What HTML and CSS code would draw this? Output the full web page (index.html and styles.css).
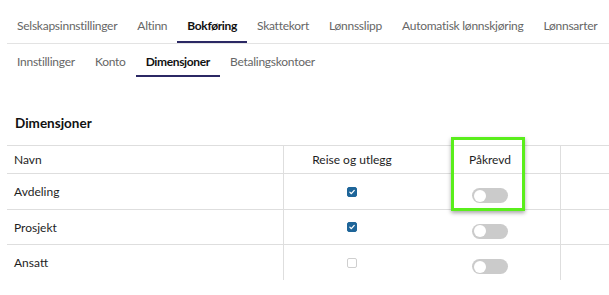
FILE: index.html
```html
<!DOCTYPE html>
<html lang="no">
<head>
<meta charset="utf-8">
<link rel="stylesheet" href="styles.css">
</head>
<body>
<nav class="tabbar tabbar-main">
  <a class="tab">Selskapsinnstillinger</a>
  <a class="tab">Altinn</a>
  <a class="tab active">Bokføring</a>
  <a class="tab">Skattekort</a>
  <a class="tab">Lønnsslipp</a>
  <a class="tab">Automatisk lønnskjøring</a>
  <a class="tab">Lønnsarter</a>
</nav>
<nav class="tabbar tabbar-sub">
  <a class="tab">Innstillinger</a>
  <a class="tab">Konto</a>
  <a class="tab active">Dimensjoner</a>
  <a class="tab">Betalingskontoer</a>
</nav>
<h2 class="heading">Dimensjoner</h2>
<div class="table-wrap">
  <div class="table">
    <div class="row head">
      <div class="cell name">Navn</div>
      <div class="cell mid">Reise og utlegg</div>
      <div class="cell mid">Påkrevd</div>
      <div class="cell last"></div>
    </div>
    <div class="row r1">
      <div class="cell name">Avdeling</div>
      <div class="cell mid"><span class="cb checked"><svg viewBox="0 0 10 10"><path d="M2.3 5.2 L4.2 7.1 L7.8 3" fill="none" stroke="#fff" stroke-width="1.6" stroke-linecap="round" stroke-linejoin="round"/></svg></span></div>
      <div class="cell mid"><span class="toggle"><span class="knob"></span></span></div>
      <div class="cell last"></div>
    </div>
    <div class="row r2">
      <div class="cell name">Prosjekt</div>
      <div class="cell mid"><span class="cb checked"><svg viewBox="0 0 10 10"><path d="M2.3 5.2 L4.2 7.1 L7.8 3" fill="none" stroke="#fff" stroke-width="1.6" stroke-linecap="round" stroke-linejoin="round"/></svg></span></div>
      <div class="cell mid"><span class="toggle"><span class="knob"></span></span></div>
      <div class="cell last"></div>
    </div>
    <div class="row r3">
      <div class="cell name">Ansatt</div>
      <div class="cell mid"><span class="cb"></span></div>
      <div class="cell mid"><span class="toggle"><span class="knob"></span></span></div>
      <div class="cell last"></div>
    </div>
  </div>
  <div class="highlight"></div>
</div>
</body>
</html>
```

FILE: styles.css
```css
* { box-sizing: border-box; }
html, body { margin: 0; padding: 0; background: #fff; }
body {
  font-family: "Lato", "Inter", "Noto Sans", sans-serif;
  font-size: 12px;
  color: #1e1e1e;
  width: 609px;
  overflow: hidden;
}
.tabbar {
  display: flex;
  margin-left: 7px;
  white-space: nowrap;
}
.tabbar-main {
  margin-top: 8px;
  border-bottom: 1px solid #e3e3e3;
}
.tab {
  display: block;
  padding: 10px 10px 7px;
  line-height: 16px;
  color: #666;
  letter-spacing: -0.25px;
  border-bottom: 2px solid transparent;
}
.tabbar-sub .tab {
  padding: 10px 10px 5px;
}
.tab.active {
  color: #111;
  font-weight: 700;
  letter-spacing: -0.35px;
  border-bottom-color: #2b2864;
}
.heading {
  margin: 37px 0 0 15px;
  font-size: 13.5px;
  line-height: 18px;
  font-weight: 700;
  color: #111;
}
.table-wrap {
  position: relative;
  margin-top: 13px;
  margin-left: 7px;
}
.table {
  display: grid;
  grid-template-columns: 277px 136px 140px 49px;
  border-top: 1px solid #dedede;
}
.row {
  display: contents;
}
.cell {
  height: 35px;
  border-bottom: 1px solid #dedede;
  display: flex;
  align-items: center;
}
.row.head .cell { height: 28px; }
.row.r1 .cell { height: 36px; }
.row.r3 .cell { border-bottom: none; height: 35px; }
.cell.name {
  padding-left: 7px;
  border-right: 1px solid #dedede;
}
.cell.mid { justify-content: center; }
.cell.last { border-left: 1px solid #dedede; }
.cb {
  width: 10px;
  height: 10px;
  border-radius: 2px;
  border: 1px solid #cfcfcf;
  background: #fff;
  display: block;
}
.cb.checked {
  background: #1e6599;
  border-color: #1e6599;
}
.cb svg { display: block; width: 8px; height: 8px; }
.toggle {
  display: block;
  position: relative;
  width: 36px;
  height: 15px;
  border-radius: 8px;
  background: #cbcbcb;
  margin-top: 8px;
}
.knob {
  position: absolute;
  left: 2px;
  top: 1.5px;
  width: 12px;
  height: 12px;
  border-radius: 50%;
  background: #fff;
}
.highlight {
  position: absolute;
  left: 444px;
  top: -8px;
  width: 74px;
  height: 74px;
  border: 3px solid #5aee1c;
  box-shadow: 0 2px 4px rgba(0,0,0,0.35);
}
```
